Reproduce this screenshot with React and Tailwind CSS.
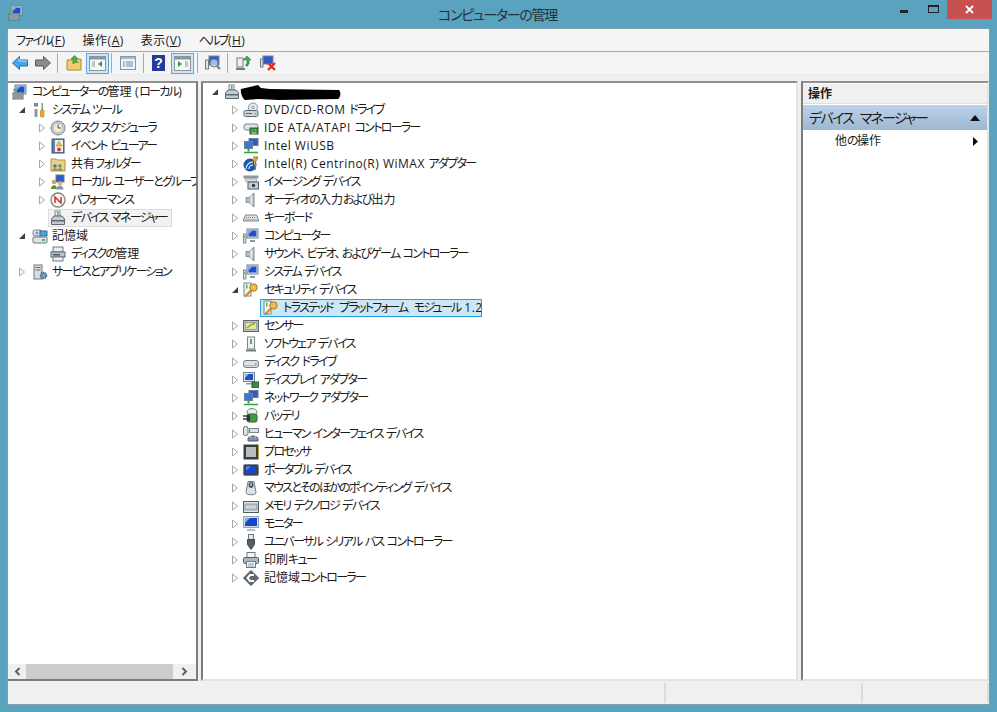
import React from "react";

// small 16x16 drawings for the mmc tree and toolbar
const Svg = ({ children, size = 16, box = 16 }) => (
  <svg width={size} height={size} viewBox={`0 0 ${box} ${box}`} className="shrink-0">
    {children}
  </svg>
);

// Meiryo UI has narrow kana and wide latin, so each run gets its own tracking
const T = ({ children, wide }) => {
  const runs = children.match(/、|[\u3040-\u30ff]+|[\u4e00-\u9fff]+|[^\u3040-\u30ff\u4e00-\u9fff、]+/g) || [];
  return runs.map((run, i) => {
    let cls = "tracking-[0.5px]";
    if (run === "、") cls = "tracking-[1px]";
    else if (/[\u3040-\u30ff]/.test(run)) cls = "tracking-[-1.7px]";
    else if (/[\u4e00-\u9fff]/.test(run)) cls = "";
    else if (run === " ") cls = wide ? "tracking-[3px]" : "tracking-[0px]";
    return (
      <span key={i} className={cls}>
        {run}
      </span>
    );
  });
};

const Screen = () => (
  <>
    <rect x="3" y="1" width="11" height="9" fill="#d5dde6" stroke="#6f7f90" />
    <rect x="4.5" y="2.5" width="8" height="6" fill="#1f4fc4" />
    <path d="M4.5 2.5h4l-4 4z" fill="#7fb0ee" />
  </>
);
const Toolbox = () => (
  <>
    <rect x="5" y="1" width="5" height="5" fill="#f2f2f2" stroke="#7c8a92" />
    <rect x="7" y="2" width="1.5" height="3" fill="#58b358" />
    <path d="M1.5 9 4 6h8l2.500 3v5.500h-13z" fill="#c4ccd2" stroke="#5c6870" />
    <rect x="1.500" y="10" width="13" height="1.500" fill="#5c6870" />
  </>
);

const icons = {
  mgmt: (
    <Svg>
      <Screen />
      <rect x="1" y="9" width="10" height="6" fill="#bcc6cc" stroke="#5e6a72" />
      <path d="M2 11h8M2 13h8" stroke="#5e6a72" />
      <circle cx="3" cy="6" r="1.800" fill="#57b657" />
    </Svg>
  ),
  tools: (
    <Svg>
      <path d="M4 1v3M4 7v8" stroke="#8d979e" strokeWidth="3" />
      <path d="M2.500 1v3h3V1" fill="none" stroke="#6d787f" />
      <rect x="9.500" y="1" width="1.500" height="7" fill="#8a949b" />
      <rect x="8.500" y="8" width="3.500" height="7" rx="1" fill="#efb01e" stroke="#a87408" strokeWidth="0.600" />
    </Svg>
  ),
  clock: (
    <Svg>
      <circle cx="8" cy="8" r="7" fill="#cfd5da" stroke="#7b858c" />
      <circle cx="8" cy="8" r="5" fill="#f7ecd2" stroke="#a5adb3" />
      <path d="M8 4.500V8h3" fill="none" stroke="#555" />
    </Svg>
  ),
  event: (
    <Svg>
      <rect x="2" y="1" width="12" height="14" fill="#5f7fae" stroke="#3d5680" />
      <rect x="5" y="2" width="8" height="12" fill="#eef1f5" />
      <path d="M9 3l3 5H6z" fill="#f2c21d" stroke="#a98410" strokeWidth="0.500" />
      <circle cx="9" cy="11.500" r="2" fill="#c8442f" />
    </Svg>
  ),
  share: (
    <Svg>
      <path d="M1 3h5l1 1h8v11H1z" fill="#edd089" stroke="#b4923f" />
      <circle cx="5" cy="10" r="1.800" fill="#3c7ab0" />
      <circle cx="10" cy="10" r="1.800" fill="#5aa04a" />
      <path d="M2.500 14.500c0-3 5-3 5 0zM7.500 14.500c0-3 5-3 5 0z" fill="#7d8a60" />
    </Svg>
  ),
  users: (
    <Svg>
      <rect x="6" y="1" width="8" height="7" fill="#2c5cc8" stroke="#66788a" />
      <circle cx="4" cy="8" r="2.300" fill="#d3a05a" />
      <path d="M1 15c0-5 6-5 6 0z" fill="#5d8f48" />
      <circle cx="10" cy="9.500" r="2.300" fill="#d9b080" />
      <path d="M6.500 15.500c0-5 7-5 7 0z" fill="#7d95ad" />
    </Svg>
  ),
  perf: (
    <Svg>
      <circle cx="8" cy="8" r="7" fill="#f5f5f5" stroke="#8a8078" strokeWidth="1.300" />
      <path d="M5 11V5l6 6V5" fill="none" stroke="#c9362a" strokeWidth="1.500" />
    </Svg>
  ),
  devmgr: (
    <Svg>
      <Toolbox />
    </Svg>
  ),
  storage: (
    <Svg>
      <rect x="1" y="2" width="9" height="6" rx="2" fill="#dfe4e7" stroke="#79858c" />
      <circle cx="5" cy="5" r="1.500" fill="#8d989e" />
      <rect x="8" y="3" width="7" height="5" fill="#4d9fdc" stroke="#2f6e9f" />
      <rect x="1" y="9" width="14" height="6" rx="1" fill="#dde3e6" stroke="#6f7b82" />
      <rect x="10" y="11" width="3" height="2" fill="#58b358" />
    </Svg>
  ),
  disk: (
    <Svg>
      <rect x="3" y="1" width="10" height="5" fill="#e8ecee" stroke="#6f7b82" />
      <rect x="1" y="6" width="14" height="5" fill="#bcc5ca" stroke="#59656c" />
      <rect x="3" y="8" width="7" height="1.500" fill="#4b565c" />
      <rect x="3" y="11" width="10" height="4" fill="#eef1f2" stroke="#6f7b82" />
    </Svg>
  ),
  services: (
    <Svg>
      <rect x="2" y="1" width="8" height="14" fill="#d6dce0" stroke="#6c777e" />
      <path d="M3.500 3.500h5M3.500 6h5" stroke="#667178" />
      <circle cx="11.500" cy="11.500" r="3" fill="#6f9cc8" stroke="#3e668d" strokeDasharray="1.500 0.700" strokeWidth="1.500" />
    </Svg>
  ),
  dvd: (
    <Svg>
      <circle cx="10" cy="5.500" r="4.500" fill="#e9edf0" stroke="#848f96" />
      <circle cx="10" cy="5.500" r="1.300" fill="#fff" stroke="#848f96" />
      <rect x="1" y="8.500" width="14" height="6" rx="1.500" fill="#cdd4d8" stroke="#5f6b72" />
      <path d="M3 11.500h6" stroke="#59656c" />
      <rect x="12" y="11" width="1.500" height="1.500" fill="#58b358" />
    </Svg>
  ),
  ide: (
    <Svg>
      <rect x="1" y="4" width="14" height="6" rx="2" fill="#e0e5e8" stroke="#78848b" />
      <rect x="7" y="8" width="8" height="6" fill="#3d8a4a" stroke="#25602f" />
      <path d="M8.500 13h5M9 10h1M12 10h1" stroke="#d7e6c9" />
    </Svg>
  ),
  net: (
    <Svg>
      <rect x="6" y="0.500" width="9" height="7" fill="#2c5cc8" stroke="#6d7f90" />
      <rect x="1.500" y="3.500" width="8" height="7" fill="#3a75d8" stroke="#6d7f90" />
      <path d="M5.500 10.500v3" stroke="#2fa43c" strokeWidth="2" />
      <path d="M1 14.500h14" stroke="#2fa43c" strokeWidth="1.500" />
    </Svg>
  ),
  wimax: (
    <Svg>
      <circle cx="7" cy="9" r="6.500" fill="#1c5aa8" />
      <path d="M3 13a7 7 0 0 1 7-7M6 13a4 4 0 0 1 4-4" fill="none" stroke="#fff" strokeWidth="1.100" />
      <path d="M10 1h5l-2.500 5v8" fill="#e5a51f" stroke="#b57c10" strokeWidth="1" />
    </Svg>
  ),
  camera: (
    <Svg>
      <path d="M0.500 1.500h15v3h-15z" fill="#8d989e" />
      <path d="M2.500 5h11v2.500h-11z" fill="#dfe4e7" stroke="#7e8a91" strokeWidth="0.600" />
      <rect x="5" y="8" width="10.500" height="7" fill="#c4ccd1" stroke="#4f5b62" />
      <circle cx="10.500" cy="11.500" r="2.300" fill="#38434a" stroke="#eee" strokeWidth="0.800" />
    </Svg>
  ),
  speaker: (
    <Svg>
      <path d="M3 5.500h3L11 1v14L6 10.500H3z" fill="#b4bcc1" stroke="#858f95" />
      <path d="M8.500 3.500v9" stroke="#e6e9eb" strokeWidth="2" />
    </Svg>
  ),
  keyboard: (
    <Svg>
      <path d="M2.500 5h11L16 11H0z" fill="#dfe3e6" stroke="#7b868d" />
      <path d="M3 7.500h10M2.500 9.500h11" stroke="#737e85" strokeDasharray="1 1" />
    </Svg>
  ),
  computer: (
    <Svg>
      <rect x="4" y="1" width="11" height="9" fill="#dbe2e8" stroke="#75848f" />
      <rect x="5.500" y="2.500" width="8" height="6" fill="#1f4fc4" />
      <path d="M5.500 2.500h4l-4 4z" fill="#7fb0ee" />
      <path d="M7 13h5" stroke="#8c979e" strokeWidth="2" />
      <rect x="0.500" y="6" width="2.500" height="9" fill="#d2d9dd" stroke="#6f7b82" strokeWidth="0.800" />
      <rect x="1.200" y="8" width="1" height="2" fill="#58b358" />
    </Svg>
  ),
  key: (
    <Svg>
      <rect x="1" y="1" width="7" height="13" fill="#f0f3ee" stroke="#79858c" />
      <rect x="3" y="2.500" width="1.500" height="4" fill="#58b358" />
      <circle cx="10.500" cy="5.500" r="3.700" fill="#f4c04c" stroke="#a9760e" />
      <circle cx="10.500" cy="5.500" r="1.200" fill="#fff" stroke="#a9760e" strokeWidth="0.600" />
      <path d="M8 8.500l-6 6" stroke="#d08a12" strokeWidth="2" />
    </Svg>
  ),
  sensor: (
    <Svg>
      <rect x="0.500" y="2.500" width="15" height="11" fill="#bcc3c7" stroke="#5a656c" />
      <rect x="2.500" y="4.500" width="11" height="7" fill="#dfe6a6" stroke="#78838a" strokeWidth="0.600" />
      <path d="M4 10l5-4M9 6l3 0" stroke="#9a9a20" strokeWidth="1.400" />
    </Svg>
  ),
  software: (
    <Svg>
      <rect x="4.500" y="1" width="7" height="12" fill="#eef1f2" stroke="#7b868d" />
      <rect x="7" y="3" width="2" height="5" fill="#58b358" />
      <rect x="3" y="13.500" width="10" height="2" fill="#717b82" />
    </Svg>
  ),
  drive: (
    <Svg>
      <rect x="0.500" y="6.500" width="15" height="7" rx="2.500" fill="#dfe4e7" stroke="#707c83" />
      <path d="M2 11.500h12" stroke="#a9b2b7" />
      <rect x="12" y="9" width="1.500" height="1.500" fill="#58b358" />
    </Svg>
  ),
  display: (
    <Svg>
      <rect x="0.500" y="0.500" width="11" height="9" fill="#dbe2e8" stroke="#75848f" />
      <rect x="2" y="2" width="8" height="6" fill="#1f4fc4" />
      <path d="M2 2h4l-4 4z" fill="#7fb0ee" />
      <rect x="3" y="11" width="6" height="1.500" fill="#8c979e" />
      <rect x="9" y="10" width="7" height="6" fill="#3d8a4a" stroke="#25602f" />
    </Svg>
  ),
  battery: (
    <Svg>
      <ellipse cx="9" cy="4" rx="5" ry="3.500" fill="#e9efe6" stroke="#6c8a68" />
      <rect x="4" y="6" width="10" height="8" rx="2" fill="#3f9a42" stroke="#26652a" />
      <path d="M0 11h5M0 8h5" stroke="#3a3f42" strokeWidth="1.400" />
      <rect x="4" y="7" width="3" height="6" fill="#2e3336" />
    </Svg>
  ),
  hid: (
    <Svg>
      <rect x="0.500" y="0.500" width="4.500" height="9" rx="2" fill="#e1e6e9" stroke="#626e75" />
      <rect x="6.500" y="2.500" width="9" height="4" fill="#dde2e5" stroke="#7b868d" />
      <path d="M5 13c0-4 10-4 10 0v2H5z" fill="#7e93ad" stroke="#485c74" />
      <path d="M7 11h1M12 11h1" stroke="#fff" />
    </Svg>
  ),
  cpu: (
    <Svg>
      <rect x="0.500" y="0.500" width="15" height="15" fill="#3a3e41" />
      <rect x="3" y="3" width="10" height="10" fill="#b8bcbe" />
      <path d="M15.500 2v12" stroke="#c9a330" strokeDasharray="1 1" />
    </Svg>
  ),
  portable: (
    <Svg>
      <rect x="0.500" y="2.500" width="15" height="11" rx="1.500" fill="#3c4247" stroke="#7b868d" />
      <rect x="3" y="4.500" width="10" height="7" fill="#1448d0" />
      <path d="M3 4.500h5l-5 4z" fill="#5a8ce8" />
    </Svg>
  ),
  mouse: (
    <Svg>
      <path d="M5 1.500h6l2 11c0 3-10 3-10 0z" fill="#dfe3e6" stroke="#717c83" />
      <ellipse cx="8" cy="5" rx="2.500" ry="3" fill="#4e575d" />
      <rect x="7.500" y="3" width="1" height="3" fill="#fff" />
    </Svg>
  ),
  memory: (
    <Svg>
      <rect x="0.500" y="3.500" width="15" height="11" fill="#e2e7ea" stroke="#4f5b62" />
      <rect x="2" y="6" width="12" height="6" fill="#bfc7cc" stroke="#8c979e" />
      <path d="M3 9h10" stroke="#eef1f2" strokeDasharray="2 1" />
    </Svg>
  ),
  monitor: (
    <Svg>
      <rect x="0.500" y="0.500" width="15" height="11" fill="#d4dce3" stroke="#9aa6af" />
      <rect x="2" y="2" width="12" height="8" fill="#1448c8" />
      <path d="M2 2h5l-5 5z" fill="#7fb0ee" />
      <path d="M4 14h8" stroke="#b4bdc2" strokeWidth="2" />
    </Svg>
  ),
  usb: (
    <Svg>
      <rect x="5.500" y="0.500" width="5" height="5" fill="#e4e7e9" stroke="#6c777e" />
      <path d="M4.500 5.500h7v5L8 15.500l-3.500-5z" fill="#585f64" stroke="#42484c" />
    </Svg>
  ),
  printer: (
    <Svg>
      <rect x="4" y="0.500" width="8" height="5" fill="#f2f4f5" stroke="#6f7b82" />
      <rect x="0.500" y="5.500" width="15" height="6" rx="1" fill="#aeb7bc" stroke="#545f66" />
      <rect x="3.500" y="9.500" width="9" height="6" fill="#f2f4f5" stroke="#6f7b82" />
      <path d="M5 12h6M5 14h6" stroke="#71a5d8" />
    </Svg>
  ),
  storctl: (
    <Svg>
      <path d="M8 0.500 15.500 8 8 15.500 0.500 8z" fill="#5f696f" stroke="#4a5359" />
      <path d="M11 5H7L4.500 8 7 11h4" fill="none" stroke="#fff" strokeWidth="2" />
    </Svg>
  ),
};

const Closed = () => (
  <svg width="8" height="10" viewBox="0 0 8 10" className="shrink-0">
    <path d="M1.500 1v8L6.500 5z" fill="#fff" stroke="#a6a6a6" />
  </svg>
);
const Open = () => (
  <svg width="8" height="10" viewBox="0 0 8 10" className="shrink-0">
    <path d="M7 2v6H1z" fill="#404040" />
  </svg>
);

const leftTree = [
  { text: "コンピューターの管理 (ローカル)", icon: "mgmt", pad: "pl-0", noSlot: true, gap: "gap-[4px]" },
  { text: "システム ツール", icon: "tools", arrow: "open", pad: "pl-[10px]", ml: "ml-[4px]", gap: "gap-[4px]" },
  { text: "タスク スケジューラ", icon: "clock", arrow: "closed", pad: "pl-[30px]" },
  { text: "イベント ビューアー", icon: "event", arrow: "closed", pad: "pl-[30px]" },
  { text: "共有フォルダー", icon: "share", arrow: "closed", pad: "pl-[30px]" },
  { text: "ローカル ユーザーとグループ", icon: "users", arrow: "closed", pad: "pl-[30px]" },
  { text: "パフォーマンス", icon: "perf", arrow: "closed", pad: "pl-[30px]" },
  { text: "デバイス マネージャー", icon: "devmgr", pad: "pl-[30px]", current: true },
  { text: "記憶域", icon: "storage", arrow: "open", pad: "pl-[10px]", ml: "ml-[4px]", gap: "gap-[4px]" },
  { text: "ディスクの管理", icon: "disk", pad: "pl-[30px]" },
  { text: "サービスとアプリケーション", icon: "services", arrow: "closed", pad: "pl-[10px]", ml: "ml-[4px]", gap: "gap-[4px]" },
];

const devices = [
  ["DVD/CD-ROM ドライブ", "dvd"],
  ["IDE ATA/ATAPI コントローラー", "ide"],
  ["Intel WiUSB", "net"],
  ["Intel(R) Centrino(R) WiMAX アダプター", "wimax"],
  ["イメージング デバイス", "camera"],
  ["オーディオの入力および出力", "speaker"],
  ["キーボード", "keyboard"],
  ["コンピューター", "computer"],
  ["サウンド、ビデオ、およびゲーム コントローラー", "speaker"],
  ["システム デバイス", "computer"],
  ["セキュリティ デバイス", "key", "open"],
  ["トラステッド プラットフォーム モジュール 1.2", "key", "selected"],
  ["センサー", "sensor"],
  ["ソフトウェア デバイス", "software"],
  ["ディスク ドライブ", "drive"],
  ["ディスプレイ アダプター", "display"],
  ["ネットワーク アダプター", "net"],
  ["バッテリ", "battery"],
  ["ヒューマン インターフェイス デバイス", "hid"],
  ["プロセッサ", "cpu"],
  ["ポータブル デバイス", "portable"],
  ["マウスとそのほかのポインティング デバイス", "mouse"],
  ["メモリ テクノロジ デバイス", "memory"],
  ["モニター", "monitor"],
  ["ユニバーサル シリアル バス コントローラー", "usb"],
  ["印刷キュー", "printer"],
  ["記憶域コントローラー", "storctl"],
];

const Sep = () => <span className="block w-px h-[20px] bg-[#a9a9a9] shrink-0" />;

const PaneIcon = ({ side }) => (
  <span className="flex items-center justify-center w-[23px] h-[21px] bg-[#cce4f7] border border-[#62a8e0] shrink-0">
    <svg width="17" height="15" viewBox="0 0 17 15">
      <rect x="0.500" y="0.500" width="16" height="14" fill="#f5f7f8" stroke="#8a959c" />
      <rect x="1" y="1" width="15" height="2.500" fill="#8a959c" />
      {side === "left" ? (
        <>
          <path d="M3 6h3M3 8h3M3 10h3" stroke="#8a959c" />
          <path d="M13 5v6L9 8z" fill="#2fa43c" />
        </>
      ) : (
        <>
          <path d="M11 6h3M11 8h3M11 10h3" stroke="#8a959c" />
          <path d="M4 5v6l4-3z" fill="#2fa43c" />
        </>
      )}
    </svg>
  </span>
);

const Toolbar = () => (
  <div className="h-[23px] flex items-center pl-[4px] bg-[#f4f4f4] border-b border-[#ececec]">
    <svg width="16" height="14" viewBox="0 0 16 14" className="shrink-0">
      <path d="M7.500 0.500v3.500H15.500v6H7.500v3.500L0.500 7z" fill="#45a5e8" stroke="#1c6fb0" />
      <path d="M7 2.500V5h8" fill="none" stroke="#bfe2fa" />
    </svg>
    <svg width="16" height="14" viewBox="0 0 16 14" className="ml-[7px] shrink-0">
      <path d="M8.500 0.500v3.500H0.500v6H8.500v3.500L15.500 7z" fill="#8c8c8c" stroke="#5c5c5c" />
    </svg>
    <span className="ml-[6px]"><Sep /></span>
    <span className="ml-[8px]">
      <svg width="16" height="16" viewBox="0 0 16 16" className="block">
        <path d="M1 5h5l1-1h8v11H1z" fill="#f0d06e" stroke="#a88a35" />
        <path d="M7 9V4H5l3.500-3.500L12 4h-2v3l3 0" fill="#52b04a" stroke="#2f7d2f" strokeWidth="0.700" />
      </svg>
    </span>
    <span className="ml-[4px]"><PaneIcon side="left" /></span>
    <span className="ml-[2px]"><Sep /></span>
    <span className="ml-[8px]">
      <svg width="16" height="16" viewBox="0 0 16 16" className="block">
        <rect x="0.500" y="1.500" width="15" height="13" fill="#eef2f5" stroke="#8796a3" />
        <rect x="1" y="2" width="14" height="2" fill="#aab6c0" />
        <path d="M3 7h2M3 9h2M3 11h2M6 7h7M6 9h7M6 11h7" stroke="#6e8cab" />
      </svg>
    </span>
    <span className="ml-[7px]"><Sep /></span>
    <span className="ml-[8px] flex items-center justify-center w-[13px] h-[16px] bg-[#27399a] text-white text-[14px] leading-none font-bold font-['Liberation_Sans',sans-serif]">
      ?
    </span>
    <span className="ml-[6px]"><PaneIcon side="right" /></span>
    <span className="ml-[3px]"><Sep /></span>
    <span className="ml-[7px]">
      <svg width="16" height="16" viewBox="0 0 16 16" className="block">
        <rect x="4" y="1" width="10" height="9" fill="#2c5cc8" stroke="#7a8a98" />
        <rect x="0.500" y="5" width="3" height="9" fill="#dfe4e7" stroke="#6f7b82" />
        <circle cx="9" cy="8" r="4" fill="#cfe3f5" fillOpacity="0.700" stroke="#6f7b82" />
        <path d="M12 11l3 3" stroke="#6f7b82" strokeWidth="2" />
      </svg>
    </span>
    <span className="ml-[6px]"><Sep /></span>
    <span className="ml-[8px]">
      <svg width="16" height="16" viewBox="0 0 16 16" className="block">
        <rect x="1" y="3" width="6" height="9" fill="#eef1f2" stroke="#6f7b82" />
        <rect x="0" y="13" width="9" height="2" fill="#6f7b82" />
        <path d="M11 1l4 4h-2v4h-1v2h-2v-2h1V5H7z" fill="#3bb04a" stroke="#1f7d2d" strokeWidth="0.600" />
      </svg>
    </span>
    <span className="ml-[8px]">
      <svg width="16" height="16" viewBox="0 0 16 16" className="block">
        <rect x="3" y="1" width="10" height="8" fill="#2c5cc8" stroke="#7a8a98" />
        <rect x="0.500" y="4" width="2.500" height="8" fill="#dfe4e7" stroke="#6f7b82" />
        <path d="M8 8l7 7M15 8l-7 7" stroke="#e0281e" strokeWidth="2.200" />
      </svg>
    </span>
  </div>
);

const Row = ({ pad, gap = "gap-[5px]", arrow, ml = "ml-[2px]", icon, text, current, noSlot }) => (
  <div className={`h-[18px] flex items-center ${pad}`}>
    {arrow === "open" ? <Open /> : arrow === "closed" ? <Closed /> : noSlot ? null : <span className="w-[8px] shrink-0" />}
    <span className={`${ml} h-[18px] flex items-center ${gap} pl-px pr-[4px] border ${current ? "bg-[#f2f2f2] border-[#dcdcdc]" : "border-transparent"}`}>
      {icons[icon]}
      <span className="whitespace-nowrap">
        <T>{text}</T>
      </span>
    </span>
  </div>
);

const Menu = ({ label, k }) => (
  <span className="tracking-[0.5px]">
    <T>{label}</T>(<span className="underline">{k}</span>)
  </span>
);

export default function App() {
  return (
    <div className="w-[997px] h-[712px] overflow-hidden flex flex-col bg-[#5aa3bf] text-[12px] text-[#1a1a1a] font-['Open_Sans','Noto_Sans_CJK_JP',sans-serif] [font-feature-settings:'palt']">
      {/* title bar */}
      <div className="h-[28px] shrink-0 flex items-start">
        <span className="w-[8px]" />
        <span className="mt-[5px]">{icons.mgmt}</span>
        <div className="flex-1 pl-[84px] text-center text-[14px] tracking-[-1.3px] leading-[30px] text-[#20323a]">コンピューターの管理</div>
        <div className="flex items-center w-[34px] justify-center h-[19px]">
          <span className="w-[8px] h-[3px] bg-[#232323] mt-[3px]" />
        </div>
        <div className="flex items-center w-[24px] justify-center h-[19px]">
          <span className="w-[11px] h-[8px] border border-t-2 border-[#232323] mb-[2px]" />
        </div>
        <div className="ml-[2px] w-[45px] h-[19px] bg-[#c75050] flex items-center justify-center mr-[5px]">
          <svg width="9" height="9" viewBox="0 0 9 9">
            <path d="M1 1l7 7M8 1l-7 7" stroke="#fff" strokeWidth="1.800" />
          </svg>
        </div>
      </div>

      {/* window body */}
      <div className="flex-1 min-h-0 mx-[7px] mb-[7px] flex flex-col bg-[#f0f0f0] border border-[#7f9fad]">
        {/* menu */}
        <div className="h-[23px] shrink-0 flex items-center pl-[8px] pt-px gap-[17px] bg-[#f5f5f5] border-b border-[#a9a9a9]">
          <Menu label="ファイル" k="F" />
          <Menu label="操作" k="A" />
          <Menu label="表示" k="V" />
          <Menu label="ヘルプ" k="H" />
        </div>
        <Toolbar />

        {/* panes */}
        <div className="flex-1 min-h-0 mt-[6px] flex bg-[#f0f0f0]">
          {/* left tree */}
          <div className="w-[190px] flex flex-col bg-white border-t-2 border-t-[#8f8f8f] border-r-2 border-r-[#7c7c7c] border-b-2 border-b-[#7c7c7c] overflow-hidden">
            <div className="flex-1 min-h-0 overflow-hidden">
              {leftTree.map((item) => (
                <Row key={item.text} {...item} />
              ))}
            </div>
            <div className="h-[15px] shrink-0 flex items-center bg-[#f0f0f0]">
              <span className="w-[18px] flex justify-center">
                <svg width="7" height="9" viewBox="0 0 7 9">
                  <path d="M5.500 1 2 4.500 5.500 8" fill="none" stroke="#606060" strokeWidth="2" />
                </svg>
              </span>
              <span className="w-[147px] h-[15px] bg-[#cdcdcd]" />
              <span className="flex-1 flex justify-center">
                <svg width="7" height="9" viewBox="0 0 7 9">
                  <path d="M1.500 1 5 4.500 1.500 8" fill="none" stroke="#606060" strokeWidth="2" />
                </svg>
              </span>
            </div>
          </div>

          {/* device list */}
          <div className="w-[597px] ml-[3px] bg-white border-t-2 border-t-[#8f8f8f] border-l-2 border-l-[#7c7c7c] border-r-2 border-r-[#e3e3e3] border-b-2 border-b-[#e3e3e3] overflow-hidden">
            <div className="h-[18px] flex items-center pl-[8px]">
              <Open />
              <span className="ml-[5px]">{icons.devmgr}</span>
              <svg width="102" height="17" viewBox="0 0 102 17" className="shrink-0">
                <path d="M1 5 18 1l3 3 9 1 69 1c2 2 2 7-1 9l-59 1-20-1-14 1C3 15 0 9 1 5z" fill="#000" />
              </svg>
            </div>
            {devices.map(([text, icon, state]) =>
              state === "selected" ? (
                <div key={text} className="h-[18px] flex items-center pl-[57px]">
                  <span className="h-[18px] w-[222px] flex items-center pl-[2px] bg-[#cce8f7] border border-[#26a0da]">
                    {icons[icon]}
                    <span className="pl-[4px] whitespace-nowrap">
                      <T wide>{text}</T>
                    </span>
                  </span>
                </div>
              ) : (
                <Row key={text} pad="pl-[28px]" arrow={state === "open" ? "open" : "closed"} icon={icon} text={text} />
              )
            )}
          </div>

          {/* actions */}
          <div className="flex-1 ml-[3px] bg-white border-t-2 border-t-[#8f8f8f] border-l-2 border-l-[#7c7c7c] border-r-2 border-r-[#e3e3e3] border-b-2 border-b-[#e3e3e3]">
            <div className="h-[20px] mt-px px-[5px] flex items-center font-bold bg-[#f0f0f0] border-b border-[#e0e0e0]">操作</div>
            <div className="mt-px h-[25px] pl-[6px] pr-[7px] flex items-center justify-between text-[14px] bg-gradient-to-b from-[#bad2ea] to-[#9fb8d2]">
              <span><T wide>デバイス マネージャー</T></span>
              <svg width="10" height="6" viewBox="0 0 10 6">
                <path d="M5 0l5 6H0z" fill="#111" />
              </svg>
            </div>
            <div className="h-[22px] pl-[32px] pr-[9px] flex items-center justify-between">
              <span><T>他の操作</T></span>
              <svg width="5" height="9" viewBox="0 0 5 9">
                <path d="M0 0l5 4.500L0 9z" fill="#111" />
              </svg>
            </div>
          </div>
        </div>

        {/* status bar */}
        <div className="h-[22px] shrink-0 mt-[1px] flex items-center py-[1px] bg-[#f0f0f0]">
          <span className="w-[658px] h-full border-r-2 border-[#dcdcdc]" />
          <span className="w-[197px] h-full border-r-2 border-[#dcdcdc]" />
          <span className="flex-1 h-full border-r-2 border-[#dcdcdc]" />
        </div>
      </div>
    </div>
  );
}
